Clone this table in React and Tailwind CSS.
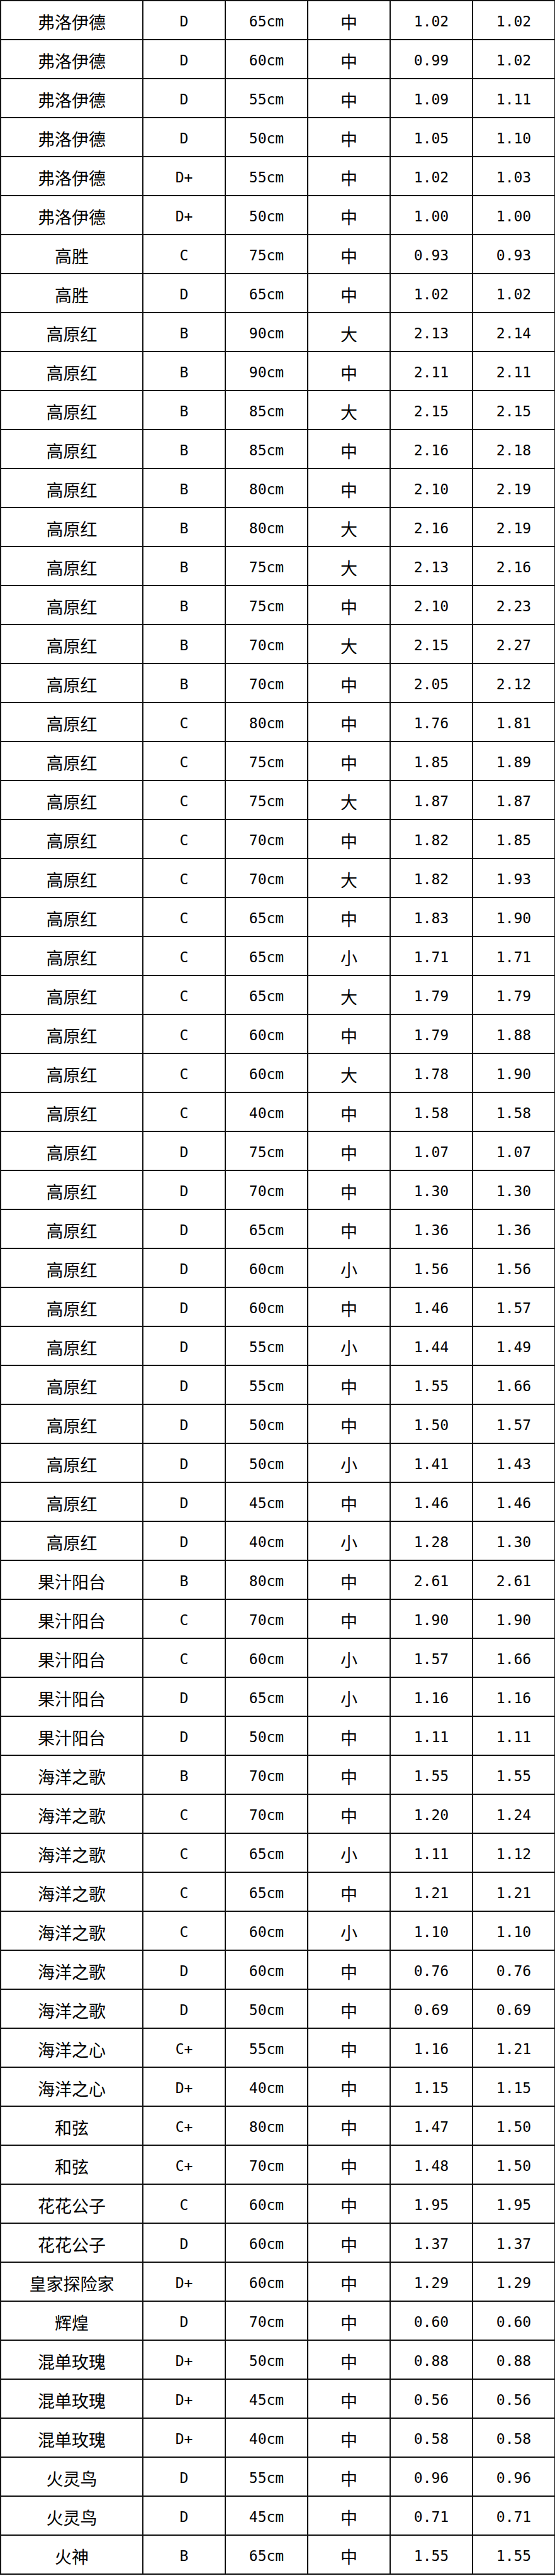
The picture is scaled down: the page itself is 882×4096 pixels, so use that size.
const rows = [
  ["弗洛伊德", "D", "65cm", "中", "1.02", "1.02"],
  ["弗洛伊德", "D", "60cm", "中", "0.99", "1.02"],
  ["弗洛伊德", "D", "55cm", "中", "1.09", "1.11"],
  ["弗洛伊德", "D", "50cm", "中", "1.05", "1.10"],
  ["弗洛伊德", "D+", "55cm", "中", "1.02", "1.03"],
  ["弗洛伊德", "D+", "50cm", "中", "1.00", "1.00"],
  ["高胜", "C", "75cm", "中", "0.93", "0.93"],
  ["高胜", "D", "65cm", "中", "1.02", "1.02"],
  ["高原红", "B", "90cm", "大", "2.13", "2.14"],
  ["高原红", "B", "90cm", "中", "2.11", "2.11"],
  ["高原红", "B", "85cm", "大", "2.15", "2.15"],
  ["高原红", "B", "85cm", "中", "2.16", "2.18"],
  ["高原红", "B", "80cm", "中", "2.10", "2.19"],
  ["高原红", "B", "80cm", "大", "2.16", "2.19"],
  ["高原红", "B", "75cm", "大", "2.13", "2.16"],
  ["高原红", "B", "75cm", "中", "2.10", "2.23"],
  ["高原红", "B", "70cm", "大", "2.15", "2.27"],
  ["高原红", "B", "70cm", "中", "2.05", "2.12"],
  ["高原红", "C", "80cm", "中", "1.76", "1.81"],
  ["高原红", "C", "75cm", "中", "1.85", "1.89"],
  ["高原红", "C", "75cm", "大", "1.87", "1.87"],
  ["高原红", "C", "70cm", "中", "1.82", "1.85"],
  ["高原红", "C", "70cm", "大", "1.82", "1.93"],
  ["高原红", "C", "65cm", "中", "1.83", "1.90"],
  ["高原红", "C", "65cm", "小", "1.71", "1.71"],
  ["高原红", "C", "65cm", "大", "1.79", "1.79"],
  ["高原红", "C", "60cm", "中", "1.79", "1.88"],
  ["高原红", "C", "60cm", "大", "1.78", "1.90"],
  ["高原红", "C", "40cm", "中", "1.58", "1.58"],
  ["高原红", "D", "75cm", "中", "1.07", "1.07"],
  ["高原红", "D", "70cm", "中", "1.30", "1.30"],
  ["高原红", "D", "65cm", "中", "1.36", "1.36"],
  ["高原红", "D", "60cm", "小", "1.56", "1.56"],
  ["高原红", "D", "60cm", "中", "1.46", "1.57"],
  ["高原红", "D", "55cm", "小", "1.44", "1.49"],
  ["高原红", "D", "55cm", "中", "1.55", "1.66"],
  ["高原红", "D", "50cm", "中", "1.50", "1.57"],
  ["高原红", "D", "50cm", "小", "1.41", "1.43"],
  ["高原红", "D", "45cm", "中", "1.46", "1.46"],
  ["高原红", "D", "40cm", "小", "1.28", "1.30"],
  ["果汁阳台", "B", "80cm", "中", "2.61", "2.61"],
  ["果汁阳台", "C", "70cm", "中", "1.90", "1.90"],
  ["果汁阳台", "C", "60cm", "小", "1.57", "1.66"],
  ["果汁阳台", "D", "65cm", "小", "1.16", "1.16"],
  ["果汁阳台", "D", "50cm", "中", "1.11", "1.11"],
  ["海洋之歌", "B", "70cm", "中", "1.55", "1.55"],
  ["海洋之歌", "C", "70cm", "中", "1.20", "1.24"],
  ["海洋之歌", "C", "65cm", "小", "1.11", "1.12"],
  ["海洋之歌", "C", "65cm", "中", "1.21", "1.21"],
  ["海洋之歌", "C", "60cm", "小", "1.10", "1.10"],
  ["海洋之歌", "D", "60cm", "中", "0.76", "0.76"],
  ["海洋之歌", "D", "50cm", "中", "0.69", "0.69"],
  ["海洋之心", "C+", "55cm", "中", "1.16", "1.21"],
  ["海洋之心", "D+", "40cm", "中", "1.15", "1.15"],
  ["和弦", "C+", "80cm", "中", "1.47", "1.50"],
  ["和弦", "C+", "70cm", "中", "1.48", "1.50"],
  ["花花公子", "C", "60cm", "中", "1.95", "1.95"],
  ["花花公子", "D", "60cm", "中", "1.37", "1.37"],
  ["皇家探险家", "D+", "60cm", "中", "1.29", "1.29"],
  ["辉煌", "D", "70cm", "中", "0.60", "0.60"],
  ["混单玫瑰", "D+", "50cm", "中", "0.88", "0.88"],
  ["混单玫瑰", "D+", "45cm", "中", "0.56", "0.56"],
  ["混单玫瑰", "D+", "40cm", "中", "0.58", "0.58"],
  ["火灵鸟", "D", "55cm", "中", "0.96", "0.96"],
  ["火灵鸟", "D", "45cm", "中", "0.71", "0.71"],
  ["火神", "B", "65cm", "中", "1.55", "1.55"],
];

const cjk = "font-['Noto_Sans_CJK_SC',sans-serif] text-[27px]";
const mono = "font-['DejaVu_Sans_Mono','Noto_Sans_CJK_SC',monospace] text-[23px]";

export default function App() {
  return (
    <div className="w-[882px] bg-white text-black">
      <table className="w-[881px] table-fixed border-collapse">
        <colgroup>
          <col className="w-[226px]" />
          <col className="w-[131px]" />
          <col className="w-[131px]" />
          <col className="w-[131px]" />
          <col className="w-[131px]" />
          <col className="w-[131px]" />
        </colgroup>
        <tbody>
          {rows.map((r, i) => (
            <tr key={i} className="h-[62px]">
              <td className={`border-2 border-[#111] text-center align-middle pt-1 leading-none ${cjk}`}>{r[0]}</td>
              <td className={`border-2 border-[#111] text-center align-middle pt-1 leading-none ${mono}`}>{r[1]}</td>
              <td className={`border-2 border-[#111] text-center align-middle pt-1 leading-none ${mono}`}>{r[2]}</td>
              <td className={`border-2 border-[#111] text-center align-middle pt-1 leading-none ${cjk}`}>{r[3]}</td>
              <td className={`border-2 border-[#111] text-center align-middle pt-1 leading-none ${mono}`}>{r[4]}</td>
              <td className={`border-2 border-[#111] text-center align-middle pt-1 leading-none ${mono}`}>{r[5]}</td>
            </tr>
          ))}
        </tbody>
      </table>
    </div>
  );
}
